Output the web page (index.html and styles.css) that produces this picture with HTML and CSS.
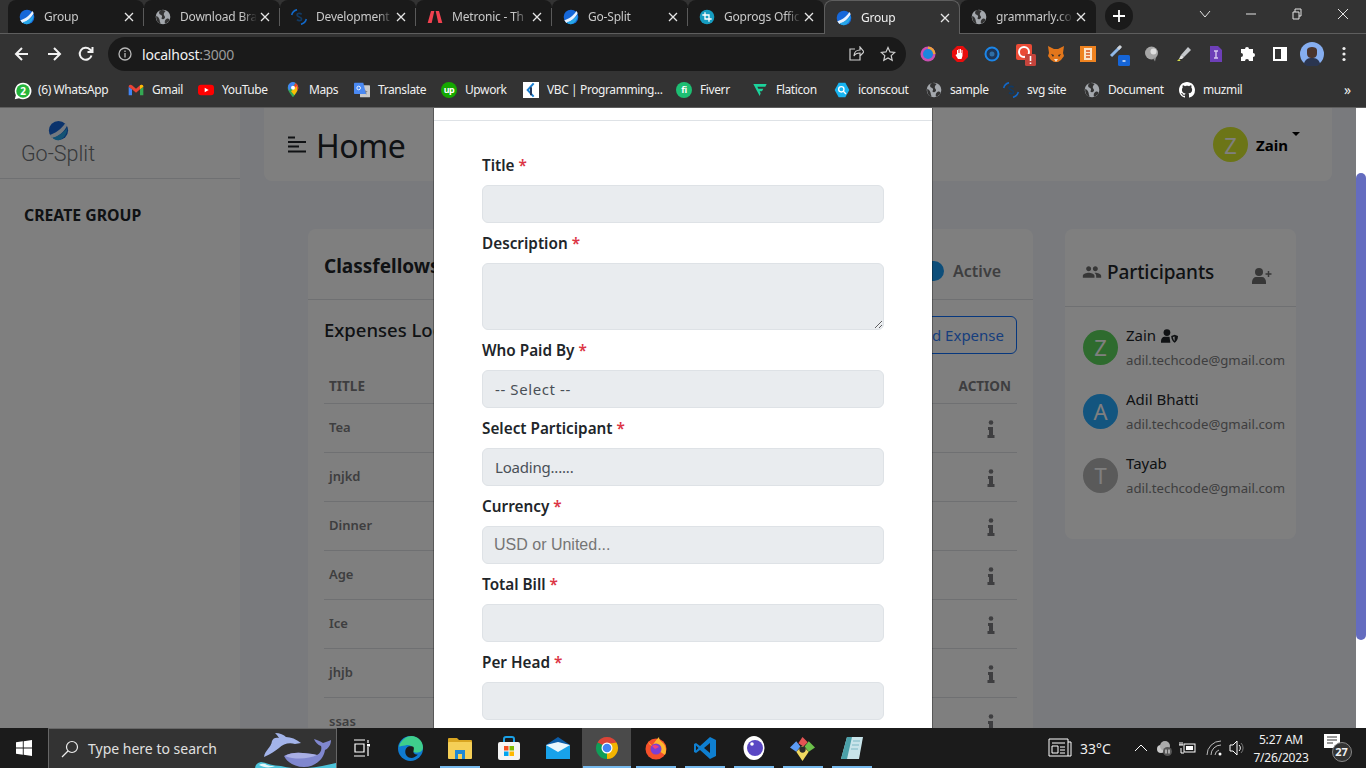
FILE: index.html
```html
<!DOCTYPE html>
<html lang="en">

<head>
    <meta charset="UTF-8" />
    <meta name="viewport" content="width=device-width, initial-scale=1.0" />
    <title>Group</title>
    <link rel="stylesheet" href="styles.css">
</head>

<body>
    <svg class="sprite" aria-hidden="true">
        <symbol id="ic-sphere" viewBox="0 0 24 24">
            <circle cx="12" cy="12" r="11" fill="#1667d9" />
            <path d="M2 17C8 15 15 11 20 3l2 3C19 13 12 19 5 21z" fill="#e8f2ff" />
            <path d="M5 20c6-1 12-5 17-11 0 7-5 14-11 14-2 0-4-1-6-3z" fill="#27a7e8" />
        </symbol>
        <symbol id="ic-globe" viewBox="0 0 24 24">
            <circle cx="12" cy="12" r="11" fill="#a4a8ad" />
            <path d="M8 2C5 5 6 8 9 9c2 1 2 3 1 4s1 3 3 2 3-3 1-5 0-5 2-7c-3-1-5-2-8-1zM17 15c-2 1-3 4-2 7 3-1 6-3 7-6-2-2-3-2-5-1zM2 10c2 1 5 4 5 7s2 4 1 5C4 21 1 16 2 10z" fill="#333" />
        </symbol>
        <symbol id="ic-dev" viewBox="0 0 24 24">
            <path d="M9 1C5 2 2 5 1 9" fill="none" stroke="#1268c9" stroke-width="2.4" />
            <path d="M15 23c4-1 7-4 8-8" fill="none" stroke="#1268c9" stroke-width="2.4" />
            <path d="M16 8c-2-2-7-2-7 1s7 3 7 6-5 3-7 1" fill="none" stroke="#123a63" stroke-width="2.4" />
        </symbol>
        <symbol id="ic-metronic" viewBox="0 0 24 24">
            <path d="M6 3h5L7 21H1zM13 3h5l5 18h-6z" fill="#f1414f" />
        </symbol>
        <symbol id="ic-goprogs" viewBox="0 0 24 24">
            <circle cx="12" cy="12" r="11" fill="#169cc0" />
            <path d="M9 5v10h10M5 9h10v10" fill="none" stroke="#fff" stroke-width="2" />
        </symbol>
        <symbol id="ic-whatsapp" viewBox="0 0 24 24">
            <path d="M12 1a11 11 0 0 0-9.500 16.500L1 23l5.700-1.500A11 11 0 1 0 12 1z" fill="#fff" />
            <circle cx="12" cy="12" r="9" fill="#25b53c" />
        </symbol>
        <symbol id="ic-gmail" viewBox="0 0 24 20">
            <path d="M1 5v13h5V9z" fill="#4285f4" />
            <path d="M23 5v13h-5V9z" fill="#34a853" />
            <path d="M1 5c0-3 3-4 5-2l6 5 6-5c2-2 5-1 5 2l-5 4-6 5-6-5z" fill="#ea4335" />
            <path d="M18 3c2-2 5-1 5 2l-5 4z" fill="#fbbc04" />
        </symbol>
        <symbol id="ic-youtube" viewBox="0 0 24 24">
            <rect x="0" y="4" width="24" height="16" rx="4.500" fill="#f00" />
            <path d="M10 8.500v7l6-3.500z" fill="#fff" />
        </symbol>
        <symbol id="ic-maps" viewBox="0 0 24 24">
            <path d="M12 23C8 17 4 13 4 8.500a8 8 0 0 1 16 0C20 13 16 17 12 23z" fill="#34a853" />
            <path d="M6 3a8 8 0 0 1 10-1.500L6 13C4.500 10 3.500 6 6 3z" fill="#4285f4" />
            <path d="M16 1.500A8 8 0 0 1 20 8.500c0 2-1 4-2 5.500L12 8z" fill="#ea4335" />
            <path d="M18 14c-1 2-3 4-4 6L9 14l9-8z" fill="#fbbc04" />
            <circle cx="12" cy="8.500" r="3" fill="#fff" />
        </symbol>
        <symbol id="ic-translate" viewBox="0 0 24 24">
            <rect x="9" y="5" width="15" height="18" rx="1" fill="#c9c9c9" />
            <path d="M16 10l1.500 3.500 3 .3-2.300 2 .7 3-2.900-1.600" fill="#7a7a7a" />
            <path d="M1 1h13l4 17H1a1 1 0 0 1-1-1V2a1 1 0 0 1 1-1z" fill="#4a89f3" />
            <circle cx="7" cy="9" r="2.700" fill="none" stroke="#fff" stroke-width="1.300" />
        </symbol>
        <symbol id="ic-vbc" viewBox="0 0 24 24">
            <rect width="24" height="24" fill="#fff" />
            <path d="M16 2L7 12l9 10" fill="none" stroke="#1b7fd1" stroke-width="3" />
            <path d="M12 8v12" fill="none" stroke="#23395d" stroke-width="3" />
        </symbol>
        <symbol id="ic-flaticon" viewBox="0 0 24 24">
            <path d="M2 3h20l-2 4H8l1.500 3H17l-2 4h-3.500L13 17l-1.500 4z" fill="#1cd39c" />
        </symbol>
        <symbol id="ic-iconscout" viewBox="0 0 24 24">
            <path d="M7 1h10l6 11-6 11H7L1 12z" fill="#17b4f1" />
            <circle cx="11" cy="11" r="4" fill="none" stroke="#fff" stroke-width="2" />
            <path d="M14 14l4 4" stroke="#fff" stroke-width="2" />
        </symbol>
        <symbol id="ic-github" viewBox="0 0 16 16">
            <path fill="#fff" d="M8 0C3.580 0 0 3.580 0 8c0 3.540 2.290 6.530 5.470 7.590.4.070.55-.17.55-.38 0-.19-.01-.82-.01-1.490-2.010.37-2.530-.49-2.690-.94-.09-.23-.48-.94-.82-1.130-.28-.15-.68-.52-.01-.53.63-.01 1.080.58 1.230.82.72 1.210 1.870.87 2.330.66.070-.52.28-.87.51-1.070-1.780-.2-3.640-.89-3.640-3.950 0-.87.31-1.590.82-2.150-.08-.2-.36-1.020.08-2.120 0 0 .67-.21 2.200.82.64-.18 1.320-.27 2-.27.68 0 1.360.09 2 .27 1.530-1.040 2.200-.82 2.200-.82.44 1.100.16 1.920.08 2.120.51.56.82 1.270.82 2.150 0 3.070-1.870 3.750-3.650 3.950.29.25.54.73.54 1.480 0 1.070-.01 1.930-.01 2.200 0 .21.15.46.55.38A8.013 8.013 0 0 0 16 8c0-4.420-3.580-8-8-8z" />
        </symbol>
        <symbol id="ic-people" viewBox="0 0 24 24">
            <path d="M16 11c1.660 0 2.990-1.340 2.990-3S17.660 5 16 5c-1.660 0-3 1.340-3 3s1.340 3 3 3zm-8 0c1.660 0 2.990-1.340 2.990-3S9.660 5 8 5C6.340 5 5 6.340 5 8s1.340 3 3 3zm0 2c-2.330 0-7 1.170-7 3.500V19h14v-2.500c0-2.330-4.670-3.500-7-3.500zm8 0c-.29 0-.62.020-.97.050 1.160.84 1.970 1.970 1.970 3.450V19h6v-2.500c0-2.330-4.670-3.500-7-3.500z" fill="currentColor" />
        </symbol>
        <symbol id="ic-user-add" viewBox="0 0 20 16">
            <circle cx="7" cy="4" r="4" fill="currentColor" />
            <path d="M0 16v-2c0-3 2-5 4-5h6c2 0 4 2 4 5v2z" fill="currentColor" />
            <path d="M16.500 3v6M13.500 6h6" stroke="currentColor" stroke-width="1.500" />
        </symbol>
        <symbol id="ic-user-shield" viewBox="0 0 20 16">
            <circle cx="7" cy="4" r="4" fill="currentColor" />
            <path d="M0 16v-2c0-3 2-5 4-5h6l1 7z" fill="currentColor" />
            <path d="M12 8l4-1.500L20 8c0 4-2 7-4 8-2-1-4-4-4-8z" fill="currentColor" />
            <path d="M16 8.500V14c-1-1-2-3-2-4.700z" fill="#fff" />
        </symbol>
        <symbol id="ic-info" viewBox="0 0 8 18">
            <circle cx="4" cy="2.500" r="2.300" fill="currentColor" />
            <path d="M1 7h5v8h1.500v3H.5v-3H2v-5H1z" fill="currentColor" />
        </symbol>
    </svg>

    <header class="tab-strip">
        <div class="tab sep">
            <svg class="tab-icon"><use href="#ic-sphere" /></svg>
            <span class="tab-title">Group</span>
            <svg class="tab-close" viewBox="0 0 10 10"><path d="M1 1l8 8M9 1l-8 8" /></svg>
        </div>
        <div class="tab sep">
            <svg class="tab-icon"><use href="#ic-globe" /></svg>
            <span class="tab-title">Download Bra</span>
            <svg class="tab-close" viewBox="0 0 10 10"><path d="M1 1l8 8M9 1l-8 8" /></svg>
        </div>
        <div class="tab sep">
            <svg class="tab-icon"><use href="#ic-dev" /></svg>
            <span class="tab-title">Development</span>
            <svg class="tab-close" viewBox="0 0 10 10"><path d="M1 1l8 8M9 1l-8 8" /></svg>
        </div>
        <div class="tab sep">
            <svg class="tab-icon"><use href="#ic-metronic" /></svg>
            <span class="tab-title">Metronic - Th</span>
            <svg class="tab-close" viewBox="0 0 10 10"><path d="M1 1l8 8M9 1l-8 8" /></svg>
        </div>
        <div class="tab sep">
            <svg class="tab-icon"><use href="#ic-sphere" /></svg>
            <span class="tab-title">Go-Split</span>
            <svg class="tab-close" viewBox="0 0 10 10"><path d="M1 1l8 8M9 1l-8 8" /></svg>
        </div>
        <div class="tab">
            <svg class="tab-icon"><use href="#ic-goprogs" /></svg>
            <span class="tab-title">Goprogs Offic</span>
            <svg class="tab-close" viewBox="0 0 10 10"><path d="M1 1l8 8M9 1l-8 8" /></svg>
        </div>
        <div class="tab tab-active">
            <svg class="tab-icon"><use href="#ic-sphere" /></svg>
            <span class="tab-title">Group</span>
            <svg class="tab-close" viewBox="0 0 10 10"><path d="M1 1l8 8M9 1l-8 8" /></svg>
        </div>
        <div class="tab">
            <svg class="tab-icon"><use href="#ic-globe" /></svg>
            <span class="tab-title">grammarly.co</span>
            <svg class="tab-close" viewBox="0 0 10 10"><path d="M1 1l8 8M9 1l-8 8" /></svg>
        </div>
        <div class="new-tab">
            <svg viewBox="0 0 14 14" width="14" height="14"><path d="M7 1v12M1 7h12" /></svg>
        </div>
        <div class="window-controls">
            <svg viewBox="0 0 12 12" width="12" height="12"><path d="M1 3l5 6 5-6" /></svg>
            <svg viewBox="0 0 12 12" width="12" height="12"><path d="M1 6h10" /></svg>
            <svg viewBox="0 0 12 12" width="12" height="12"><path d="M2 4h6v7H2zM4 4V1h6v7H8" /></svg>
            <svg viewBox="0 0 12 12" width="12" height="12"><path d="M1 1l10 10M11 1L1 11" /></svg>
        </div>
    </header>

    <nav class="toolbar">
        <div class="nav-btn">
            <svg viewBox="0 0 16 16" width="16" height="16"><path d="M14 8H2M8 2L2 8l6 6" /></svg>
        </div>
        <div class="nav-btn">
            <svg viewBox="0 0 16 16" width="16" height="16"><path d="M2 8h12M8 2l6 6-6 6" /></svg>
        </div>
        <div class="nav-btn">
            <svg viewBox="0 0 16 16" width="16" height="16"><path d="M13.500 9.500A6 6 0 1 1 12 3.500L14 5.500M14.500 1v5h-5" /></svg>
        </div>
        <div class="omnibox">
            <svg class="omni-info" viewBox="0 0 14 14" width="14" height="14">
                <circle cx="7" cy="7" r="6" />
                <path d="M7 6v4.500M7 3.500v1.500" />
            </svg>
            <span class="omni-url">localhost<span class="omni-port">:3000</span></span>
            <svg class="omni-action" viewBox="0 0 16 16" width="16" height="16"><path d="M7 3H2v11h10v-4M6 10c0-4 3-6 6-6V1l4 5-4 4V7c-3 0-5 1-6 3z" /></svg>
            <svg class="omni-action" viewBox="0 0 16 16" width="16" height="16"><path d="M8 1.500l2 4.400 4.700.5-3.500 3.200 1 4.700L8 11.900l-4.200 2.400 1-4.700-3.500-3.200 4.700-.5z" /></svg>
        </div>
        <div class="extensions">
            <div class="ext">
                <svg viewBox="0 0 16 16" width="16" height="16"><circle cx="8" cy="8" r="7.500" fill="#c94fb0" /><path d="M8 .5A7.500 7.500 0 0 1 15.500 8H12L8 4z" fill="#f0a23c" /><circle cx="8" cy="8" r="5" fill="#1b86dd" /></svg>
            </div>
            <div class="ext">
                <svg viewBox="0 0 16 16" width="16" height="16"><path d="M5 0h6l5 5v6l-5 5H5l-5-5V5z" fill="#e80d0d" /><path d="M5 8V4h1v3h.5V3h1v4H8V3h1v4h.5V4h1v6l-1 3H6L3.500 9l1-.5z" fill="#fff" /></svg>
            </div>
            <div class="ext">
                <svg viewBox="0 0 16 16" width="16" height="16"><circle cx="8" cy="8" r="6.500" fill="#1d3557" stroke="#1c86e8" stroke-width="2" /><circle cx="8" cy="8" r="2.500" fill="#2f6ea5" /></svg>
            </div>
            <div class="ext">
                <svg viewBox="0 0 24 24" width="24" height="24"><rect x="4" y="2" width="16" height="16" rx="2" fill="#ea4b36" /><circle cx="12" cy="10" r="5" fill="none" stroke="#fff" stroke-width="2" /><rect x="13" y="12" width="11" height="12" rx="1.500" fill="#c5443c" /><path d="M18.500 14v5M18.500 20.500v1.500" stroke="#fff" stroke-width="1.600" /></svg>
            </div>
            <div class="ext">
                <svg viewBox="0 0 18 18" width="18" height="18"><path d="M1 1l6 3h4l6-3-1 7 1 3-3 4-3 2H7l-3-2-3-4 1-3z" fill="#e2761b" /><path d="M4 9l3 1-1 2zM14 9l-3 1 1 2z" fill="#2b2b2b" /><path d="M7 14h4l-2 3z" fill="#f2e3d0" /></svg>
            </div>
            <div class="ext">
                <svg viewBox="0 0 16 16" width="16" height="16"><rect width="16" height="16" fill="#ef8320" /><path d="M4 2h8v12H4z" fill="#fbe3c8" /><path d="M6 5h4M6 8h4M6 11h4" stroke="#d9551a" stroke-width="1.600" /></svg>
            </div>
            <div class="ext">
                <svg viewBox="0 0 24 24" width="24" height="24"><path d="M3 14L12 5" stroke="#8fb8e8" stroke-width="3" /><path d="M10 7l3-3" stroke="#cfd3d8" stroke-width="3" /><rect x="10" y="13" width="12" height="11" rx="1.500" fill="#1565d8" /><path d="M14.500 19h3" stroke="#fff" stroke-width="1.300" /></svg>
            </div>
            <div class="ext">
                <svg viewBox="0 0 16 16" width="16" height="16"><circle cx="7.500" cy="7" r="6.500" fill="#a6a6a6" /><circle cx="9.500" cy="5.500" r="3" fill="#dedede" /><path d="M9 12l2 3.500 1-4z" fill="#8c8c8c" /></svg>
            </div>
            <div class="ext">
                <svg viewBox="0 0 16 16" width="16" height="16"><path d="M5 9l7-8 3 3-7 7z" fill="#c5c8cc" /><path d="M5 9l3 2-2 2H3z" fill="#e3e3e3" /><path d="M1 15l2-2 1.500 1-.5 1z" fill="#d6e04a" /></svg>
            </div>
            <div class="ext">
                <svg viewBox="0 0 12 16" width="12" height="16"><path d="M0 0h8l4 4v12H0z" fill="#6d3fb8" /><path d="M4 5h4M6 5v7M4 12h4" stroke="#d6c8ef" stroke-width="1.400" /></svg>
            </div>
            <div class="ext">
                <svg viewBox="0 0 16 16" width="16" height="16"><path d="M5 3a2 2 0 0 1 4 0h4v4a2 2 0 0 1 0 4v4H9a2 2 0 0 0-4 0H1v-4a2 2 0 0 0 0-4V3z" fill="#fff" /></svg>
            </div>
            <div class="ext">
                <svg viewBox="0 0 14 14" width="14" height="14"><rect x="1" y="1" width="12" height="12" fill="none" stroke="#fff" stroke-width="2" /><rect x="8" y="1" width="5" height="12" fill="#fff" /></svg>
            </div>
            <div class="ext">
                <svg viewBox="0 0 24 24" width="24" height="24"><circle cx="12" cy="12" r="12" fill="#86aef0" /><path d="M7 8c0-4 10-4 10 0v3c0 4-2 5-5 5s-5-1-5-5z" fill="#4a352e" /><path d="M4 22c1-5 4-6 8-6s7 1 8 6a12 12 0 0 1-16 0z" fill="#2a3550" /></svg>
            </div>
            <div class="ext">
                <svg viewBox="0 0 4 16" width="4" height="16"><circle cx="2" cy="2.500" r="1.600" fill="#eee" /><circle cx="2" cy="8" r="1.600" fill="#eee" /><circle cx="2" cy="13.500" r="1.600" fill="#eee" /></svg>
            </div>
        </div>
    </nav>

    <div class="bookmarks">
        <div class="bm"><span class="bm-badge"><svg class="bm-icon"><use href="#ic-whatsapp" /></svg><b class="bm-count">2</b></span>(6) WhatsApp</div>
        <div class="bm"><svg class="bm-icon"><use href="#ic-gmail" /></svg>Gmail</div>
        <div class="bm"><svg class="bm-icon"><use href="#ic-youtube" /></svg>YouTube</div>
        <div class="bm"><svg class="bm-icon"><use href="#ic-maps" /></svg>Maps</div>
        <div class="bm"><svg class="bm-icon"><use href="#ic-translate" /></svg>Translate</div>
        <div class="bm"><span class="bm-round bm-upwork">up</span>Upwork</div>
        <div class="bm"><svg class="bm-icon"><use href="#ic-vbc" /></svg>VBC | Programming...</div>
        <div class="bm"><span class="bm-round bm-fiverr">fi</span>Fiverr</div>
        <div class="bm"><svg class="bm-icon"><use href="#ic-flaticon" /></svg>Flaticon</div>
        <div class="bm"><svg class="bm-icon"><use href="#ic-iconscout" /></svg>iconscout</div>
        <div class="bm"><svg class="bm-icon"><use href="#ic-globe" /></svg>sample</div>
        <div class="bm"><svg class="bm-icon"><use href="#ic-dev" /></svg>svg site</div>
        <div class="bm"><svg class="bm-icon"><use href="#ic-globe" /></svg>Document</div>
        <div class="bm"><svg class="bm-icon"><use href="#ic-github" /></svg>muzmil</div>
        <div class="bm bm-more">»</div>
    </div>

    <div class="viewport">
        <div class="page">
            <aside class="sidebar">
                <div class="logo">
                    <svg class="logo-mark"><use href="#ic-sphere" /></svg>
                    <span class="logo-text">Go-Split</span>
                </div>
                <div class="side-link">CREATE GROUP</div>
            </aside>

            <main class="main">
                <div class="topbar">
                    <svg class="menu-icon" viewBox="0 0 18 17" width="18" height="17">
                        <path d="M0 1.500h7M0 6h18M0 10.500h11M0 15.500h18" />
                    </svg>
                    <h1 class="page-title">Home</h1>
                    <div class="user">
                        <span class="avatar avatar-olive">Z</span>
                        <span class="user-name">Zain</span>
                        <span class="caret"></span>
                    </div>
                </div>

                <div class="content">
                    <section class="card">
                        <div class="card-head">
                            <h3 class="group-name">Classfellows</h3>
                            <div class="status">
                                <span class="switch"></span>
                                <span class="status-text">Active</span>
                            </div>
                        </div>
                        <div class="card-body">
                            <div class="log-head">
                                <h4 class="log-title">Expenses Log</h4>
                                <button class="btn-outline">Add Expense</button>
                            </div>
                            <table class="log-table">
                                <thead>
                                    <tr>
                                        <th>TITLE</th>
                                        <th class="col-action">ACTION</th>
                                    </tr>
                                </thead>
                                <tbody>
                                    <tr><td>Tea</td><td class="col-action"><svg class="info-icon"><use href="#ic-info" /></svg></td></tr>
                                    <tr><td>jnjkd</td><td class="col-action"><svg class="info-icon"><use href="#ic-info" /></svg></td></tr>
                                    <tr><td>Dinner</td><td class="col-action"><svg class="info-icon"><use href="#ic-info" /></svg></td></tr>
                                    <tr><td>Age</td><td class="col-action"><svg class="info-icon"><use href="#ic-info" /></svg></td></tr>
                                    <tr><td>Ice</td><td class="col-action"><svg class="info-icon"><use href="#ic-info" /></svg></td></tr>
                                    <tr><td>jhjb</td><td class="col-action"><svg class="info-icon"><use href="#ic-info" /></svg></td></tr>
                                    <tr><td>ssas</td><td class="col-action"><svg class="info-icon"><use href="#ic-info" /></svg></td></tr>
                                </tbody>
                            </table>
                        </div>
                    </section>

                    <section class="card participants">
                        <div class="part-head">
                            <svg class="part-icon"><use href="#ic-people" /></svg>
                            <h3 class="part-title">Participants</h3>
                            <svg class="part-add"><use href="#ic-user-add" /></svg>
                        </div>
                        <div class="part-list">
                            <div class="person">
                                <span class="avatar avatar-green">Z</span>
                                <div>
                                    <div class="person-name">Zain <svg class="admin-icon"><use href="#ic-user-shield" /></svg></div>
                                    <div class="person-mail">adil.techcode@gmail.com</div>
                                </div>
                            </div>
                            <div class="person">
                                <span class="avatar avatar-blue">A</span>
                                <div>
                                    <div class="person-name">Adil Bhatti</div>
                                    <div class="person-mail">adil.techcode@gmail.com</div>
                                </div>
                            </div>
                            <div class="person">
                                <span class="avatar avatar-grey">T</span>
                                <div>
                                    <div class="person-name">Tayab</div>
                                    <div class="person-mail">adil.techcode@gmail.com</div>
                                </div>
                            </div>
                        </div>
                    </section>
                </div>
            </main>

            <div class="backdrop"></div>

            <div class="modal">
                <div class="modal-head"></div>
                <form class="modal-body">
                    <label class="field-label">Title <span class="req">*</span></label>
                    <input class="field" type="text" />

                    <label class="field-label">Description <span class="req">*</span></label>
                    <textarea class="field field-area"></textarea>

                    <label class="field-label">Who Paid By <span class="req">*</span></label>
                    <select class="field field-spaced">
                        <option>-- Select --</option>
                    </select>

                    <label class="field-label">Select Participant <span class="req">*</span></label>
                    <select class="field field-tight">
                        <option>Loading......</option>
                    </select>

                    <label class="field-label">Currency <span class="req">*</span></label>
                    <input class="field field-currency" type="text" placeholder="USD or United..." />

                    <label class="field-label">Total Bill <span class="req">*</span></label>
                    <input class="field" type="text" />

                    <label class="field-label">Per Head <span class="req">*</span></label>
                    <input class="field" type="text" />
                </form>
            </div>
        </div>

        <div class="scrollbar">
            <div class="scroll-thumb"></div>
        </div>
    </div>

    <footer class="taskbar">
        <div class="start">
            <svg viewBox="0 0 16 16" width="16" height="16"><path d="M0 2.300l6.800-1v6.300H0zM7.700 1.200L16 0v7.600H7.700zM0 8.400h6.800v6.300l-6.800-1zM7.700 8.400H16V16l-8.300-1.200z" fill="#fff" /></svg>
        </div>
        <div class="search">
            <svg class="search-icon" viewBox="0 0 18 18" width="18" height="18"><circle cx="11" cy="7" r="5.500" /><path d="M7 11l-6 6" /></svg>
            <span class="search-text">Type here to search</span>
            <svg class="search-art" viewBox="0 0 87 40" width="87" height="40">
                <path d="M6 40C6 36 8 34 12 33 18 34 24 37 32 37 50 42 70 38 87 34V40z" fill="#4cc3d9" />
                <path d="M10 36c4-2 6-1 8 0s5 1 8 1c-4 2-11 2-16-1z" fill="#e6f7fa" />
                <path d="M15 28C16 21 22 19 23 12 24 9 27 8 30 9 28 6 27 5 26 4 31 4 35 6 37 8 42 8 47 10 52 14L46 15C40 13 34 15 30 19 26 22 22 25 15 28z" fill="#a3b4ea" />
                <path d="M35 27C44 22 56 24 68 26 72 24 73 20 72 17 69 16 66 13 65 10 69 11 72 13 74 14 77 13 80 12 82 11 82 15 80 19 76 21 75 30 66 38 55 38 45 38 38 33 35 27z" fill="#8087cf" />
                <path d="M36 27C44 22 56 24 68 26 60 30 46 31 36 27z" fill="#a9afe4" />
            </svg>
        </div>
        <div class="task-icons">
            <div class="task">
                <svg viewBox="0 0 18 18" width="18" height="18"><path d="M1 1h11M1 17h11M2 5h9v8H2zM15 1v3M15 8v9" fill="none" stroke="#fff" stroke-width="1.200" /><rect x="14" y="5" width="3" height="2.500" fill="#fff" /></svg>
            </div>
            <div class="task">
                <svg viewBox="0 0 24 24" width="25" height="25"><circle cx="12" cy="12" r="12" fill="#0f7bd1" /><path d="M1 10C3 3 9 0 13 0c6 0 11 5 11 11 0 3-3 5-6 5-3 0-5-1-4-4 0-2-3-4-7-3-3 0-5 1-6 1z" fill="#3fce8c" /><path d="M7 15c0-4 3-6 7-5 2 .5 1 3 1 4-1 3 2 4 4 4-2 2-4 3-6 3-4 0-6-3-6-6z" fill="#1b1b1b" /></svg>
            </div>
            <div class="task task-on">
                <svg viewBox="0 0 24 22" width="24" height="22"><path d="M0 2a1 1 0 0 1 1-1h8l2 2h12a1 1 0 0 1 1 1v4H0z" fill="#d9a521" /><rect y="5" width="24" height="17" rx="1" fill="#f5cf57" /><path d="M7 13h10v9h-3v-5h-4v5H7z" fill="#1e88d4" /></svg>
            </div>
            <div class="task">
                <svg viewBox="0 0 24 24" width="24" height="24"><path d="M7 6V3a2 2 0 0 1 2-2h6a2 2 0 0 1 2 2v3" fill="none" stroke="#1aa0e6" stroke-width="2" /><rect x="1" y="6" width="22" height="18" rx="2" fill="#f4f4f4" /><rect x="7" y="10" width="4.500" height="4.500" fill="#f25022" /><rect x="12.500" y="10" width="4.500" height="4.500" fill="#7fba00" /><rect x="7" y="15.500" width="4.500" height="4.500" fill="#00a4ef" /><rect x="12.500" y="15.500" width="4.500" height="4.500" fill="#ffb900" /></svg>
            </div>
            <div class="task">
                <svg viewBox="0 0 24 24" width="24" height="24"><path d="M12 1l12 8v14H0V9z" fill="#0c5da8" /><rect y="9" width="24" height="14" fill="#18a2ea" /><path d="M0 9l12 7 12-7-12-3z" fill="#e9f6fd" /></svg>
            </div>
            <div class="task task-on task-active">
                <svg viewBox="0 0 24 24" width="24" height="24"><path d="M21.530 6.500A11 11 0 0 0 2.470 6.500L12 12z" fill="#db4437" /><path d="M2.470 6.500A11 11 0 0 0 12 23l2-11z" fill="#0f9d58" /><path d="M12 23A11 11 0 0 0 21.530 6.500L12 8z" fill="#f4b400" /><circle cx="12" cy="12" r="5.500" fill="#fff" /><circle cx="12" cy="12" r="4.300" fill="#4285f4" /></svg>
            </div>
            <div class="task task-on">
                <svg viewBox="0 0 24 24" width="24" height="24"><circle cx="12" cy="13" r="10.500" fill="#f5502a" /><path d="M4 6c1 2 2 3 4 4 2-3 4-6 7-9 0 3 2 4 4 6 3 3 4 8 2 12L12 13z" fill="#ffb52e" /><circle cx="12" cy="13" r="5.500" fill="#7b3fd4" /><path d="M8 10c3-2 5-1 7 1l-4 2z" fill="#f13f7d" /></svg>
            </div>
            <div class="task task-on">
                <svg viewBox="0 0 24 24" width="24" height="24"><path d="M17 1l6 3v16l-6 3L7 14l-4 3-2-1V8l2-1 4 3z" fill="#0f7fd0" /><path d="M17 7l-6 5 6 5z" fill="#1b1b1b" /><path d="M3 9.500v5l2.500-2.500z" fill="#1b1b1b" /></svg>
            </div>
            <div class="task task-on">
                <svg viewBox="0 0 24 24" width="24" height="24"><ellipse cx="12" cy="12" rx="10.500" ry="12" fill="#fff" /><circle cx="13" cy="12" r="8" fill="#5a47c4" /><circle cx="10" cy="8" r="1.800" fill="#fff" /></svg>
            </div>
            <div class="task task-on">
                <svg viewBox="0 0 24 24" width="25" height="25"><path d="M12 9l6 6-6 9-6-9z" fill="#f0d860" /><path d="M6 15L0 11l6-6 4 5z" fill="#5d9cf5" /><path d="M18 15l6-4-6-6-4 5z" fill="#6cc04a" /><path d="M8 7l4-6 5 5-4 4z" fill="#e25454" /><circle cx="12" cy="13" r="3" fill="#2a2a2a" /></svg>
            </div>
            <div class="task task-on">
                <svg viewBox="0 0 24 24" width="24" height="24"><path d="M7 1h16l-4 22H1z" fill="#c8e4ea" /><path d="M7 1l-6 22h6l5-22z" fill="#4ba0a8" /><path d="M13 5h7M12 9h7M11 13h7" stroke="#7cb8c4" /></svg>
            </div>
        </div>
        <div class="tray">
            <svg viewBox="0 0 24 20" width="24" height="20"><path d="M1 1h19v17H1zM20 4h3v14h-3M4 5h13M4 8h6v7H4zM12 9h5M12 12h5M12 15h5" fill="none" stroke="#fff" /></svg>
            <span class="tray-temp">33°C</span>
            <svg viewBox="0 0 14 8" width="14" height="8"><path d="M1 7l6-6 6 6" fill="none" stroke="#fff" /></svg>
            <svg viewBox="0 0 16 16" width="16" height="16"><circle cx="5" cy="9" r="4" fill="#c9c9c9" /><circle cx="9" cy="6" r="5" fill="#aaa" /><circle cx="11.500" cy="11.500" r="4.500" fill="#565656" /><path d="M10 9.500v4M13 9.500v4" stroke="#fff" /></svg>
            <svg viewBox="0 0 18 14" width="18" height="14"><path d="M1 4h4M2 1v3M4 1v3M3 7v5h3" fill="none" stroke="#fff" /><rect x="6" y="3" width="11" height="8" fill="none" stroke="#fff" /><rect x="8" y="5" width="7" height="4" fill="#fff" /></svg>
            <svg viewBox="0 0 16 16" width="16" height="16"><path d="M1 15A14 14 0 0 1 15 1M5 15A10 10 0 0 1 15 5M9 15a6 6 0 0 1 4-5" fill="none" stroke="#bbb" /><circle cx="14" cy="14" r="1.500" fill="#fff" /></svg>
            <svg viewBox="0 0 16 16" width="16" height="16"><path d="M1 5h3l4-4v14l-4-4H1zM10 5a4 4 0 0 1 0 6" fill="none" stroke="#fff" /><path d="M12 3a7 7 0 0 1 0 10" fill="none" stroke="#777" /></svg>
            <div class="clock">
                <div>5:27 AM</div>
                <div>7/26/2023</div>
            </div>
            <div class="notify">
                <svg viewBox="0 0 16 14" width="16" height="14"><path d="M0 0h16v14H0z" fill="#fff" /><path d="M3 3h10M3 6h10M3 9h6" stroke="#333" /></svg>
                <span class="notify-count">27</span>
            </div>
        </div>
    </footer>
</body>

</html>
```

FILE: styles.css
```css
:root {
    --frame: #333333;
    --frame-dark: #1a1a1a;
    --ui-font: "Noto Sans", "Open Sans", sans-serif;
    --page-bg: #f2f4fb;
    --line: #dfe1e4;
    --text: #212529;
    --muted: #7d7d80;
}

* {
    box-sizing: border-box;
}

html,
body {
    margin: 0;
    height: 100%;
    overflow: hidden;
}

body {
    display: flex;
    flex-direction: column;
    font-family: var(--ui-font);
    color: var(--text);
    background: var(--frame);
}

.sprite {
    display: none;
}

/* browser tabs */
.tab-strip {
    display: flex;
    align-items: flex-end;
    height: 34px;
    padding-left: 8px;
    background: var(--frame);
    border-bottom: 1px solid #5e5e5e;
}

.tab {
    display: flex;
    align-items: center;
    width: 136px;
    height: 33px;
    padding: 0 11px;
    background: var(--frame-dark);
    border-radius: 8px 8px 0 0;
    color: #c9c9c9;
}

.tab.sep {
    background: linear-gradient(#5a5a5a, #5a5a5a) right center / 1px 18px no-repeat, var(--frame-dark);
}

.tab-active {
    height: 34px;
    margin-bottom: -1px;
    background: var(--frame);
    border: 1px solid #5e5e5e;
    border-bottom: none;
    color: #f0f0f0;
}

.tab-icon {
    flex: none;
    width: 16px;
    height: 16px;
    margin-right: 9px;
}

.tab-title {
    flex: 1;
    overflow: hidden;
    white-space: nowrap;
    font-size: 12px;
    letter-spacing: -0.2px;
    mask-image: linear-gradient(to right, #000 80%, transparent 100%);
}

.tab-close {
    flex: none;
    width: 10px;
    height: 10px;
    margin: 0 -1px 0 3px;
}

.tab-active .tab-close {
    margin-right: -2px;
}

.tab-close path {
    fill: none;
    stroke: #e6e6e6;
    stroke-width: 1.3;
}

.new-tab {
    display: flex;
    align-items: center;
    justify-content: center;
    width: 28px;
    height: 28px;
    margin: 0 0 3px 9px;
    border-radius: 50%;
    background: var(--frame-dark);
}

.new-tab path {
    fill: none;
    stroke: #fff;
    stroke-width: 1.8;
}

.window-controls {
    display: flex;
    align-self: flex-start;
    gap: 34px;
    margin: 8px 17px 0 auto;
}

.window-controls path {
    fill: none;
    stroke: #e4e4e4;
}

/* address bar */
.toolbar {
    display: flex;
    align-items: center;
    height: 40px;
    padding-left: 6px;
    background: var(--frame);
}

.nav-btn {
    display: flex;
    align-items: center;
    justify-content: center;
    width: 32px;
}

.nav-btn path {
    fill: none;
    stroke: #f2f2f2;
    stroke-width: 2;
}

.omnibox {
    display: flex;
    align-items: center;
    width: 798px;
    height: 34px;
    margin: 0 6px;
    padding: 0 10px;
    border-radius: 17px;
    background: var(--frame-dark);
}

.omni-info {
    margin-right: 10px;
}

.omni-info circle,
.omni-info path {
    fill: none;
    stroke: #b8b8b8;
    stroke-width: 1.3;
}

.omni-url {
    flex: 1;
    font-size: 14px;
    letter-spacing: -0.2px;
    color: #f2f2f2;
}

.omni-port {
    color: #9a9a9a;
}

.omni-action {
    margin-left: 16px;
}

.omni-action path {
    fill: none;
    stroke: #cfcfcf;
    stroke-width: 1.2;
}

.extensions {
    display: flex;
}

.ext {
    display: flex;
    align-items: center;
    justify-content: center;
    width: 32px;
    height: 32px;
}

/* bookmarks */
.bookmarks {
    display: grid;
    grid-template-columns: 114px 70px 87px 69px 87px 82px 153px 76px 82px 92px 77px 81px 95px 165px 20px;
    align-items: center;
    height: 34px;
    padding: 0 0 2px 14px;
    background: var(--frame);
    border-bottom: 1px solid #5e5e5e;
}

.bm {
    display: flex;
    align-items: center;
    gap: 8px;
    font-size: 12px;
    letter-spacing: -0.4px;
    white-space: nowrap;
    color: #f0f0f0;
}

.bm-badge {
    display: grid;
    place-items: center;
    width: 16px;
    height: 16px;
}

.bm-badge .bm-icon {
    grid-area: 1 / 1;
    width: 18px;
    height: 18px;
}

.bm-count {
    grid-area: 1 / 1;
    z-index: 1;
    font-size: 10px;
    color: #fff;
}

.bm-icon {
    flex: none;
    width: 16px;
    height: 16px;
}

.bm-round {
    display: flex;
    flex: none;
    align-items: center;
    justify-content: center;
    width: 16px;
    height: 16px;
    border-radius: 50%;
    font-size: 9px;
    font-weight: 700;
    color: #fff;
}

.bm-upwork {
    background: #15a800;
}

.bm-fiverr {
    background: #1dbf73;
}

.bm-more {
    font-size: 14px;
}

/* page under the modal */
.viewport {
    display: flex;
    flex: 1;
    min-height: 0;
    overflow: hidden;
}

.page {
    position: relative;
    display: flex;
    flex: 1;
    overflow: hidden;
    background: var(--page-bg);
}

.sidebar {
    flex: none;
    width: 240px;
    background: #fff;
}

.logo {
    display: flex;
    flex-direction: column;
    align-items: center;
    width: 116px;
    height: 70px;
    padding-top: 12px;
}

.logo-mark {
    width: 21px;
    height: 21px;
}

.logo-text {
    font-family: Roboto, sans-serif;
    font-size: 21.5px;
    font-weight: 300;
    line-height: 26px;
    color: #6e7276;
}

.side-link {
    padding: 25px 24px;
    border-top: 1px solid var(--line);
    font-size: 15.8px;
    font-weight: 700;
    line-height: 22px;
}

.main {
    flex: 1;
    min-width: 0;
    padding: 0 24px;
}

.topbar {
    display: flex;
    align-items: center;
    height: 73px;
    padding: 0 24px;
    background: #fff;
    border-radius: 0 0 8px 8px;
}

.menu-icon path {
    fill: none;
    stroke: var(--text);
    stroke-width: 2;
}

.page-title {
    margin: 2px 0 0 10px;
    font-size: 32px;
    font-weight: 400;
    letter-spacing: -0.4px;
}

.user {
    display: flex;
    align-items: center;
    margin-left: auto;
    margin-right: 8px;
}

.user-name {
    margin-left: 8px;
    font-size: 15px;
    font-weight: 700;
    color: #000;
}

.caret {
    align-self: flex-start;
    margin: 5px 0 0 4px;
    border: 4px solid transparent;
    border-top-color: #000;
    border-bottom: 0;
}

.avatar {
    display: flex;
    flex: none;
    align-items: center;
    justify-content: center;
    width: 35px;
    height: 35px;
    border-radius: 50%;
    font-size: 22px;
    color: #fff;
}

.avatar-olive {
    background: #d8ea2e;
}

.avatar-green {
    background: #5cd65c;
}

.avatar-blue {
    background: #26aaff;
}

.avatar-grey {
    background: #b4b4b4;
}

.content {
    display: grid;
    grid-template-columns: 725px 231px;
    gap: 32px;
    align-items: start;
    padding: 48px 0 0 44px;
}

.card {
    background: #fff;
    border-radius: 8px;
}

.card-head {
    display: flex;
    align-items: center;
    justify-content: space-between;
    height: 71px;
    padding: 0 32px 0 16px;
    border-bottom: 1px solid var(--line);
}

.group-name {
    margin: 4px 0 0;
    font-size: 19px;
    font-weight: 700;
}

.status {
    display: flex;
    align-items: center;
    gap: 9px;
    margin-top: 14px;
}

.switch {
    width: 40px;
    height: 20px;
    border-radius: 10px;
    background: #1a9cf5;
}

.status-text {
    font-size: 16px;
    font-weight: 600;
    color: var(--muted);
}

.card-body {
    padding: 16px;
}

.log-head {
    display: flex;
    align-items: center;
    justify-content: space-between;
    margin-bottom: 16px;
}

.log-title {
    margin: 0 0 12px;
    font-size: 18.5px;
    font-weight: 500;
}

.btn-outline {
    height: 38px;
    padding: 0 12px;
    border: 1px solid #0d6efd;
    border-radius: 6px;
    background: none;
    font-family: var(--ui-font);
    font-size: 15px;
    color: #2f7dfb;
}

.log-table {
    width: 100%;
    border-collapse: collapse;
    table-layout: fixed;
}

.log-table th {
    height: 33px;
    padding: 0 6px 0 5px;
    border-bottom: 1px solid var(--line);
    font-size: 13.5px;
    font-weight: 700;
    text-align: left;
    color: var(--muted);
}

.log-table td {
    height: 49px;
    padding: 0 5px 1px;
    border-bottom: 1px solid var(--line);
    font-size: 13px;
    font-weight: 600;
    color: var(--muted);
}

.log-table .col-action {
    width: 66px;
    text-align: right;
}

.log-table td.col-action {
    padding: 6px 22px 0 0;
}

.info-icon {
    display: inline-block;
    width: 8px;
    height: 18px;
}

.participants {
    height: 310px;
}

.part-head {
    display: flex;
    align-items: center;
    height: 78px;
    padding: 8px 24px 0 17px;
    border-bottom: 1px solid var(--line);
}

.part-icon {
    width: 20px;
    height: 20px;
    color: #6e6e6e;
}

.part-title {
    flex: 1;
    margin: 0 0 0 5px;
    font-size: 19px;
    font-weight: 500;
    letter-spacing: -0.1px;
}

.part-add {
    width: 20px;
    height: 16px;
    margin-top: 8px;
    color: #6e6e6e;
}

.part-list {
    display: flex;
    flex-direction: column;
    gap: 14px;
    padding: 16px 0 0 18px;
}

.person {
    display: flex;
    align-items: center;
    gap: 8px;
}

.person .avatar {
    margin-bottom: 2px;
}

.person-name {
    display: flex;
    align-items: center;
    gap: 5px;
    font-size: 15px;
    line-height: 24px;
}

.person-mail {
    font-size: 13.2px;
    line-height: 26px;
    color: var(--muted);
    white-space: nowrap;
}

.admin-icon {
    width: 17px;
    height: 14px;
    margin-top: 2px;
}

/* modal over the dimmed page */
.backdrop {
    position: absolute;
    inset: 0;
    background: rgba(0, 0, 0, 0.5);
}

.modal {
    position: absolute;
    top: 0;
    bottom: 0;
    left: 434px;
    width: 498px;
    background: #fff;
    box-shadow: 0 0 0 1px rgba(0, 0, 0, 0.3);
}

.modal-head {
    height: 13px;
    border-bottom: 1px solid #dee2e6;
}

.modal-body {
    display: flex;
    flex-direction: column;
    padding: 32px 48px 0;
}

.field-label {
    height: 24px;
    margin-bottom: 8px;
    font-size: 15.3px;
    font-weight: 600;
    line-height: 24px;
}

.req {
    color: #dc3545;
}

.field {
    width: 100%;
    height: 38px;
    margin-bottom: 8px;
    padding: 0 12px;
    border: 1px solid #dee2e6;
    border-radius: 6px;
    background: #e9ecef;
    font-family: var(--ui-font);
    font-size: 15px;
    color: #495057;
    appearance: none;
    outline: none;
}

.field-spaced {
    letter-spacing: 0.6px;
}

.field-tight {
    letter-spacing: -0.2px;
}

.field-area {
    height: 67px;
    display: block;
    resize: vertical;
}

.field-currency {
    padding-left: 11px;
    font-family: "Liberation Sans", Arial, sans-serif;
    font-size: 16px;
}

.field-currency::placeholder {
    color: #757575;
}

.scrollbar {
    flex: none;
    width: 10px;
    padding-top: 65px;
    background: #fff;
}

.scroll-thumb {
    height: 467px;
    border-radius: 5px;
    background: #646cbf;
}

/* windows taskbar */
.taskbar {
    display: flex;
    flex: none;
    height: 40px;
    background: #1b1b1b;
}

.start {
    display: flex;
    align-items: center;
    justify-content: center;
    width: 48px;
}

.search {
    display: flex;
    align-items: center;
    width: 289px;
    padding-left: 12px;
    overflow: hidden;
    background: #333;
    border: 1px solid #666;
    border-bottom: none;
}

.search-icon circle,
.search-icon path {
    fill: none;
    stroke: #eee;
    stroke-width: 1.2;
}

.search-text {
    flex: 1;
    margin-left: 9px;
    font-size: 14px;
    color: #e0e0e0;
}

.search-art {
    flex: none;
}

.task-icons {
    display: flex;
}

.task {
    display: flex;
    align-items: center;
    justify-content: center;
    width: 49px;
    background: no-repeat center bottom / 40px 2px;
}

.task-on {
    background-image: linear-gradient(#76b9ed, #76b9ed);
}

.task-active {
    background: linear-gradient(#76b9ed, #76b9ed) no-repeat center bottom / 48px 2px, #4a4a4a;
}

.tray {
    display: grid;
    grid-template-columns: 40px 49px 24px 22px 24px 30px 16px 72px 49px;
    align-items: center;
    justify-items: center;
    width: 326px;
    margin-left: auto;
    color: #f0f0f0;
}

.tray-temp {
    justify-self: start;
    font-size: 14px;
}

.clock {
    padding-top: 1px;
    font-size: 12px;
    line-height: 18px;
    letter-spacing: -0.2px;
    text-align: center;
    white-space: nowrap;
}

.notify {
    display: flex;
    align-items: flex-end;
    height: 28px;
    margin-right: 8px;
}

.notify svg {
    align-self: flex-start;
}

.notify-count {
    width: 20px;
    height: 20px;
    margin-left: -8px;
    border: 1px solid #888;
    border-radius: 50%;
    background: #333;
    font-size: 11px;
    font-weight: 700;
    line-height: 18px;
    text-align: center;
}
```
